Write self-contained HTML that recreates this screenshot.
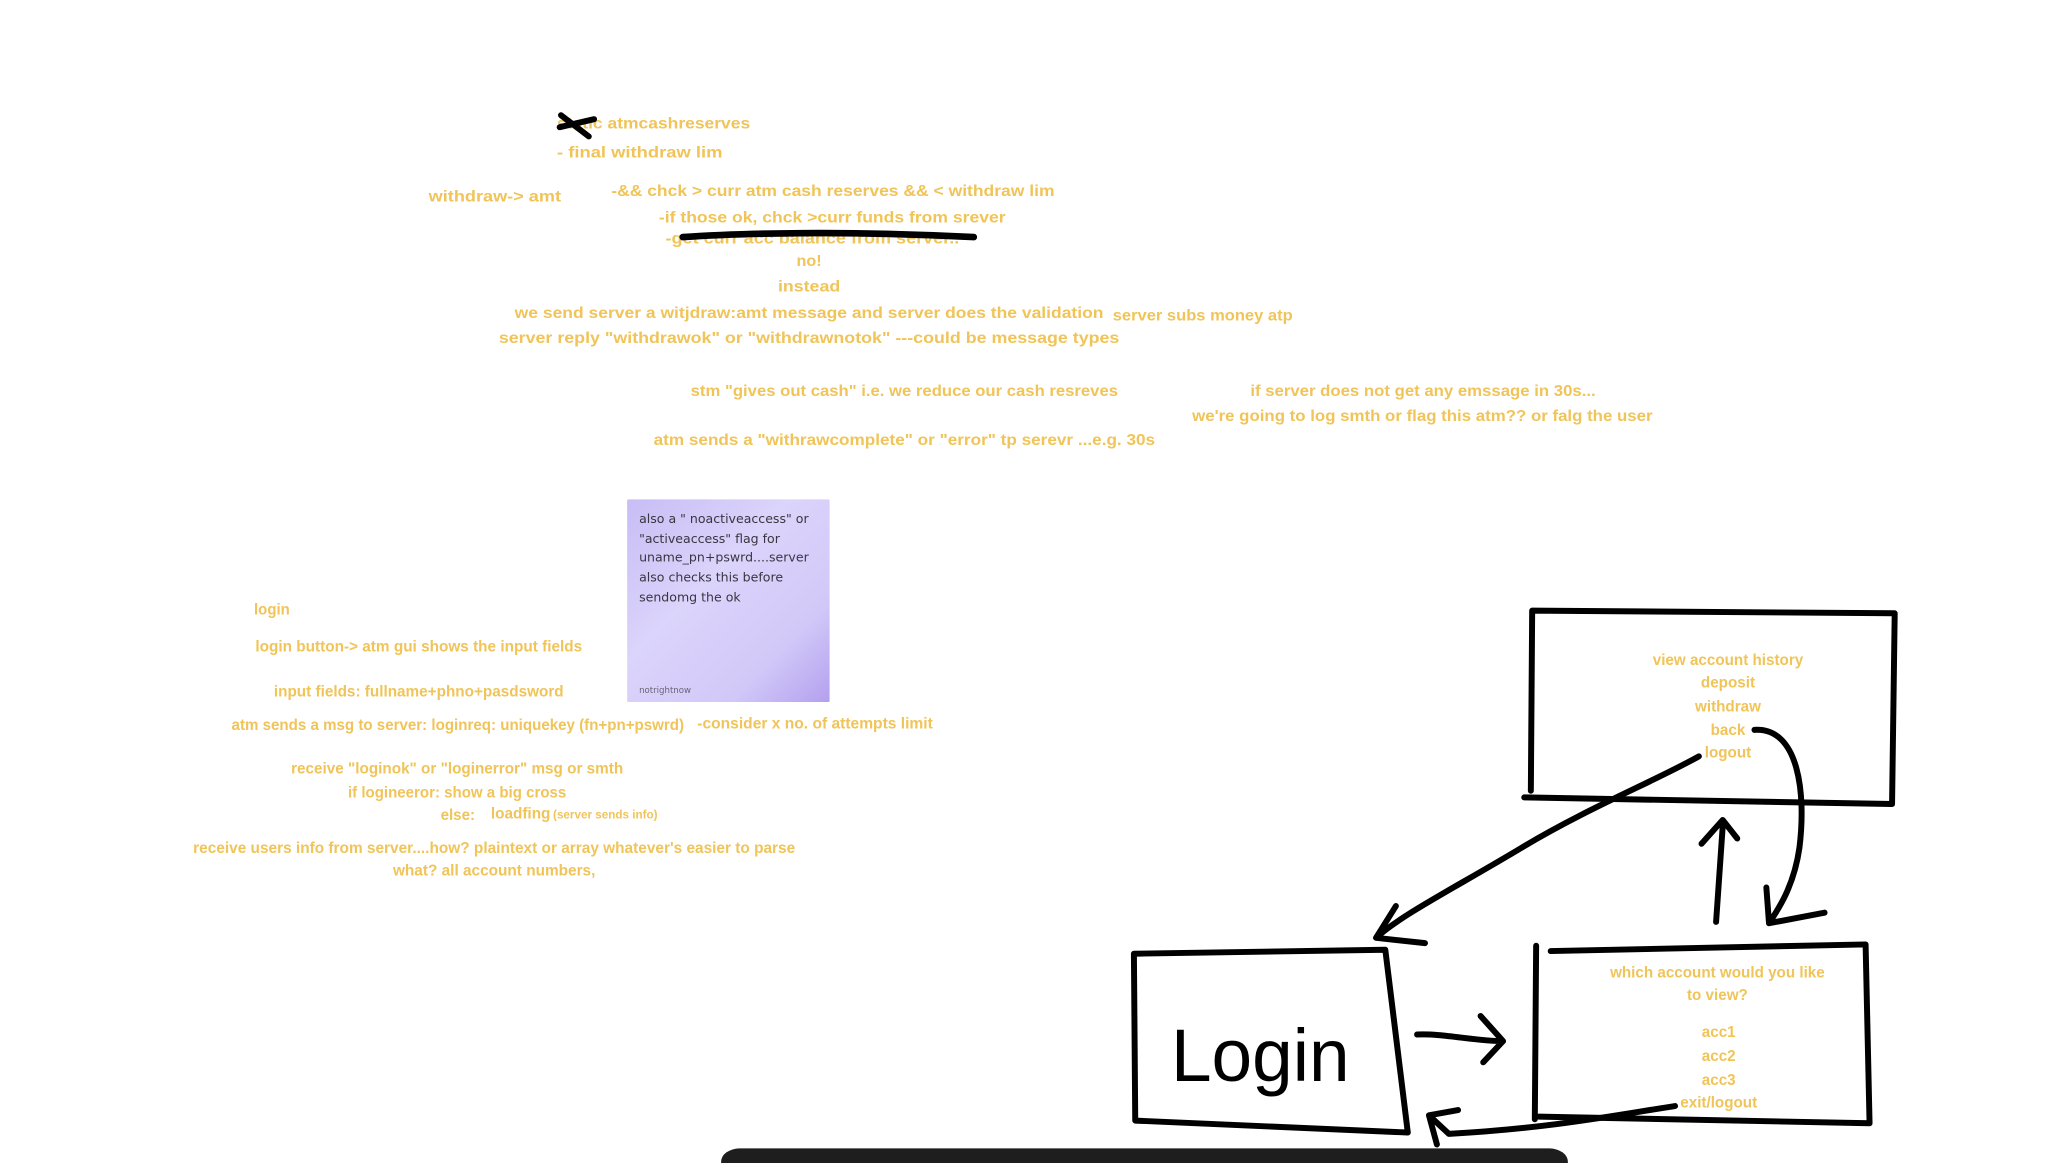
<!DOCTYPE html>
<html><head><meta charset="utf-8"><style>
html,body{margin:0;padding:0;background:#fff;width:2072px;height:1163px;overflow:hidden}
svg{display:block}
.t{font-family:"Liberation Sans",sans-serif;font-weight:bold;font-size:11.5px;fill:#f0c458}
.n{font-family:"DejaVu Sans","Liberation Sans",sans-serif;font-size:9.5px;fill:#3a3540}
.k{fill:none;stroke:#000;stroke-width:4.5;stroke-linecap:round;stroke-linejoin:round}
</style></head><body>
<svg width="2072" height="1163" viewBox="0 0 1566 878" preserveAspectRatio="none" xmlns="http://www.w3.org/2000/svg">
<defs><linearGradient id="g" x1="0" y1="0" x2="1" y2="1">
<stop offset="0" stop-color="#c8bdf5"/><stop offset="0.4" stop-color="#dbd4fb"/><stop offset="0.75" stop-color="#d2c8f8"/><stop offset="1" stop-color="#b3a0ee"/></linearGradient></defs>
<g class="t">
<text x="421" y="97" textLength="146" lengthAdjust="spacingAndGlyphs">static atmcashreserves</text>
<text x="421" y="119" textLength="125" lengthAdjust="spacingAndGlyphs">- final withdraw lim</text>
<text x="324" y="152" textLength="100" lengthAdjust="spacingAndGlyphs">withdraw-&gt; amt</text>
<text x="462" y="148" textLength="335" lengthAdjust="spacingAndGlyphs">-&amp;&amp; chck &gt; curr atm cash reserves &amp;&amp; &lt; withdraw lim</text>
<text x="498" y="168" textLength="262" lengthAdjust="spacingAndGlyphs">-if those ok, chck &gt;curr funds from srever</text>
<text x="503" y="184" textLength="222" lengthAdjust="spacingAndGlyphs">-get curr acc balance from server..</text>
<text x="602" y="201" textLength="19" lengthAdjust="spacingAndGlyphs">no!</text>
<text x="588" y="220" textLength="47" lengthAdjust="spacingAndGlyphs">instead</text>
<text x="389" y="240" textLength="445" lengthAdjust="spacingAndGlyphs">we send server a witjdraw:amt message and server does the validation</text>
<text x="841" y="242" textLength="136" lengthAdjust="spacingAndGlyphs">server subs money atp</text>
<text x="377" y="259" textLength="469" lengthAdjust="spacingAndGlyphs">server reply "withdrawok" or "withdrawnotok" ---could be message types</text>
<text x="522" y="299" textLength="323" lengthAdjust="spacingAndGlyphs">stm "gives out cash" i.e. we reduce our cash resreves</text>
<text x="945" y="299" textLength="261" lengthAdjust="spacingAndGlyphs">if server does not get any emssage in 30s...</text>
<text x="901" y="318" textLength="348" lengthAdjust="spacingAndGlyphs">we're going to log smth or flag this atm?? or falg the user</text>
<text x="494" y="336" textLength="379" lengthAdjust="spacingAndGlyphs">atm sends a "withrawcomplete" or "error" tp serevr ...e.g. 30s</text>
<text x="192" y="464" textLength="27" lengthAdjust="spacingAndGlyphs">login</text>
<text x="193" y="492" textLength="247" lengthAdjust="spacingAndGlyphs">login button-&gt; atm gui shows the input fields</text>
<text x="207" y="526" textLength="219" lengthAdjust="spacingAndGlyphs">input fields: fullname+phno+pasdsword</text>
<text x="175" y="551" textLength="342" lengthAdjust="spacingAndGlyphs">atm sends a msg to server: loginreq: uniquekey (fn+pn+pswrd)</text>
<text x="527" y="550" textLength="178" lengthAdjust="spacingAndGlyphs">-consider x no. of attempts limit</text>
<text x="220" y="584" textLength="251" lengthAdjust="spacingAndGlyphs">receive "loginok" or "loginerror" msg or smth</text>
<text x="263" y="602" textLength="165" lengthAdjust="spacingAndGlyphs">if logineeror: show a big cross</text>
<text x="333" y="619" textLength="26" lengthAdjust="spacingAndGlyphs">else:</text>
<text x="371" y="618" textLength="45" lengthAdjust="spacingAndGlyphs">loadfing</text>
<text x="418" y="618" textLength="79" lengthAdjust="spacingAndGlyphs" style="font-size:9px">(server sends info)</text>
<text x="146" y="644" textLength="455" lengthAdjust="spacingAndGlyphs">receive users info from server....how? plaintext or array whatever's easier to parse</text>
<text x="297" y="661" textLength="153" lengthAdjust="spacingAndGlyphs">what? all account numbers,</text>
</g>
<g class="t" text-anchor="middle">
<text x="1306" y="502">view account history</text>
<text x="1306" y="519">deposit</text>
<text x="1306" y="537">withdraw</text>
<text x="1306" y="555">back</text>
<text x="1306" y="572">logout</text>
<text x="1298" y="738">which account would you like</text>
<text x="1298" y="755">to view?</text>
<text x="1299" y="783">acc1</text>
<text x="1299" y="801">acc2</text>
<text x="1299" y="819">acc3</text>
<text x="1299" y="836">exit/logout</text>
</g>
<rect x="474" y="377" width="153" height="153" fill="url(#g)" rx="1"/>
<g class="n">
<text x="483" y="395">also a " noactiveaccess" or</text>
<text x="483" y="410">"activeaccess" flag for</text>
<text x="483" y="424">uname_pn+pswrd....server</text>
<text x="483" y="439">also checks this before</text>
<text x="483" y="454">sendomg the ok</text>
<text x="483" y="523" style="font-size:6.5px;fill:#6a6378">notrightnow</text>
</g>
<g class="k">
<path d="M424 87 L445 103 M423 96 L449 90"/>
<path d="M516 179 C560 176 640 174 736 179" stroke-width="5"/>
<path d="M1158 461 L1432 463 L1430 607 L1152 602 M1158 461 L1157 597"/>
<path d="M857 720 L1047 717 L1064 855 L858 846 Z"/>
<path d="M1161 714 L1160 845 M1172 718 L1410 713 L1413 848 L1163 843"/>
<path d="M1071 781 C1090 780 1115 786 1136 786 M1119 767 L1136 786 L1121 802"/>
<path d="M1297 696 L1302 624 M1286 637 L1302 619 L1313 633"/>
<path d="M1326 551 C1360 549 1365 600 1360 640 C1356 668 1345 685 1337 697 L1335 670 M1337 697 L1379 689"/>
<path d="M1284 571 C1250 590 1200 610 1150 640 C1100 670 1060 690 1040 708 L1055 684 M1040 708 L1077 712"/>
<path d="M1266 835 C1220 842 1170 852 1095 856 L1080 842 L1102 838 M1080 842 L1086 864"/>
</g>
<text x="885" y="816" style="font-family:'Liberation Sans',sans-serif;font-size:56px;fill:#000" textLength="135" lengthAdjust="spacingAndGlyphs">Login</text>
<rect x="545" y="867" width="640" height="20" rx="14" fill="#1e1e1e"/>
</svg>
</body></html>
